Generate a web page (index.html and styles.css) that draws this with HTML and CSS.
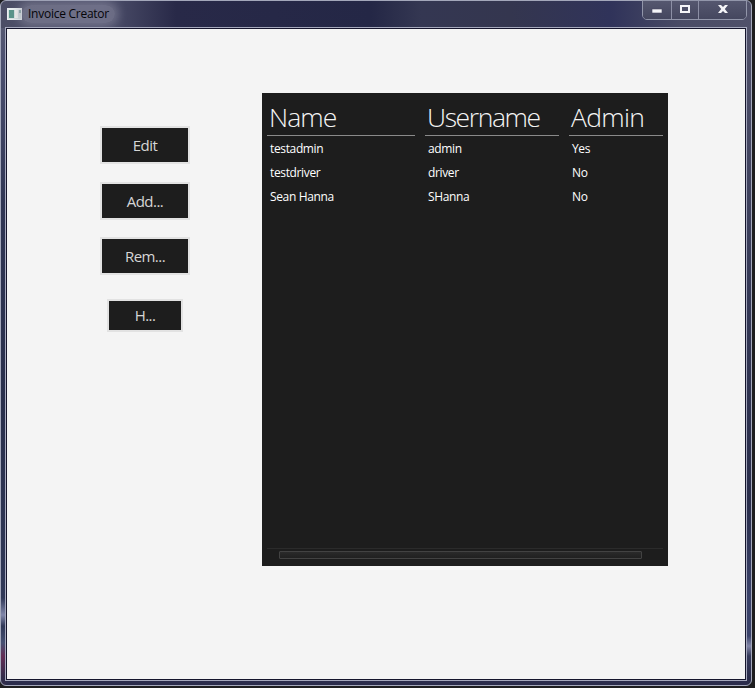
FILE: index.html
```
<!DOCTYPE html>
<html lang="en">
<head>
<meta charset="utf-8">
<title>Invoice Creator</title>
<link rel="stylesheet" href="styles.css">
</head>
<body>
<div class="window">
  <header class="titlebar">
    <svg class="app-icon" width="15" height="12" viewBox="0 0 15 12"><rect width="15" height="12" fill="#e9eff0"/><rect x="1" y="2" width="13" height="9" fill="#d5dfdf"/><rect x="2" y="2" width="5" height="8" fill="#599489"/><rect x="8" y="2" width="3" height="8" fill="#f0f2ee"/><rect x="12" y="2" width="2" height="3" fill="#8eaaa9"/></svg>
    <span class="title">Invoice Creator</span>
    <div class="controls">
      <span class="control min"><svg width="12" height="10" viewBox="0 0 12 10"><rect x="1" y="5" width="10" height="4" fill="#f5f5f8" stroke="#464861" stroke-width=".6"/></svg></span>
      <span class="control max"><svg width="12" height="10" viewBox="0 0 12 10"><path d="M2 2h8v6H2z" fill="none" stroke="#f5f5f8" stroke-width="2"/></svg></span>
      <span class="control close"><svg width="12" height="10" viewBox="0 0 12 10"><path d="M1 1h3l2 2 2-2h3L7.8 5 11 9H8L6 7 4 9H1l3.2-4z" fill="#f5f5f8"/></svg></span>
    </div>
  </header>
  <main class="client">
    <nav class="actions">
      <button class="btn">Edit</button>
      <button class="btn">Add...</button>
      <button class="btn btn-remove">Rem...</button>
      <button class="btn btn-home">H...</button>
    </nav>
    <section class="panel">
      <div class="grid">
        <div class="col"><h2 class="head"><span class="head-name">Name</span></h2><span>testadmin</span><span>testdriver</span><span>Sean Hanna</span></div>
        <div class="col"><h2 class="head"><span class="head-user">Username</span></h2><span>admin</span><span>driver</span><span>SHanna</span></div>
        <div class="col"><h2 class="head"><span class="head-admin">Admin</span></h2><span>Yes</span><span>No</span><span>No</span></div>
      </div>
      <div class="scrollbar"><div class="thumb"></div></div>
    </section>
  </main>
</div>
</body>
</html>
```
FILE: styles.css
```
* { box-sizing: border-box; }
body {
  margin: 0;
  width: 755px;
  height: 688px;
  overflow: hidden;
  background: #1d1d1f;
  font-family: "Open Sans", "Noto Sans", sans-serif;
}
.window {
  width: 752px;
  height: 686px;
  border: 1px solid #a3a7ba;
  border-radius: 6px;
  padding: 0 4px 4px;
  display: flex;
  flex-direction: column;
  background:
    linear-gradient(180deg, #555871 0, #4c5070 33px, #303654 173px, #292f4c 373px, #303857 570px, #8187aa 587px, #303857 598px, #465072 615px, #632e55 628px, #302c4a 650px) 0 27px / 5px 100% no-repeat,
    linear-gradient(180deg, #4f5068, #484a65 73px, #343856 273px, #292d4b 473px, #3a426a 570px, #3a426a 608px, #8286a8 618px, #353a5b 628px, #292b49 650px) 100% 27px / 5px 100% no-repeat,
    linear-gradient(90deg, #4b4d65 0, #50526d 100px, #282948 175px, #242746 370px, #343752 420px, #34364f 510px, #30335a 610px, #494b65 680px, #50516a) 0 0 / 100% 27px no-repeat,
    #2b2c4c;
}
.titlebar {
  flex: none;
  height: 26px;
  display: flex;
  align-items: flex-start;
  padding-left: 2px;
}
.app-icon { margin-top: 7px; flex: none; }
.title {
  margin: 4px 0 0 0;
  padding: 0 6px;
  height: 18px;
  line-height: 18px;
  font-size: 12px;
  letter-spacing: -.26px;
  color: #050509;
  white-space: nowrap;
  border-radius: 9px;
  background: rgba(144, 145, 166, .48);
  box-shadow: 0 0 8px 4px rgba(144, 145, 166, .48);
}
.controls {
  display: flex;
  width: 105px;
  height: 20px;
  margin: -1px 0 0 auto;
  border: 1px solid #9296aa;
  border-radius: 0 0 5px 5px;
}
.control {
  display: flex;
  justify-content: center;
  align-items: center;
  padding-bottom: 2px;
  border-right: 1px solid #8c8fa5;
  background: linear-gradient(#55576f, #45475f);
}
.min { width: 29px; border-radius: 0 0 0 4px; }
.max { width: 27px; }
.close { flex: 1; border-right: 0; border-radius: 0 0 4px 0; }
.client {
  flex: 1;
  display: flex;
  align-items: flex-start;
  border: 1px solid #a6a9bd;
  outline: 1px solid #15152c;
  outline-offset: -2px;
  background: #f4f4f4;
}
.actions {
  width: 90px;
  margin: 98px 0 0 94px;
  display: flex;
  flex-direction: column;
  align-items: center;
  gap: 18px;
}
.btn {
  width: 90px;
  height: 38px;
  padding: 0;
  border: 2px solid #e2e2e2;
  background: #1d1d1d;
  color: #d6d6d6;
  font: 15px/32px "Open Sans", sans-serif;
  letter-spacing: -.55px;
}
.btn-remove { margin-top: -1px; }
.btn-home { width: 76px; height: 33px; line-height: 27px; margin-top: 6px; }
.panel {
  width: 406px;
  height: 473px;
  margin: 65px 0 0 72px;
  padding: 5px 5px 6px;
  display: flex;
  flex-direction: column;
  justify-content: space-between;
  background: #1d1d1d;
}
.grid {
  display: grid;
  grid-template-columns: 148px 134px 94px;
  gap: 10px;
}
.col { display: flex; flex-direction: column; }
.col > span {
  height: 24px;
  padding-left: 3px;
  font-size: 12px;
  line-height: 24px;
  letter-spacing: -.36px;
  color: #fff;
}
.head {
  height: 38px;
  margin: 0 0 1px;
  padding-left: 2px;
  border-bottom: 1px solid #8a8a8a;
  color: #f4f4f4;
  font-size: 26.5px;
  font-weight: 300;
  line-height: 39px;
  white-space: nowrap;
}
.head span { display: inline-block; letter-spacing: -.9px; }
.head .head-user { letter-spacing: -1.4px; }
.head .head-admin { letter-spacing: -.7px; }
.scrollbar {
  height: 12px;
  padding: 2px 21px 0 12px;
  border-top: 1px solid #2b2b2b;
}
.thumb {
  height: 8px;
  border: 1px solid #424242;
  border-radius: 1px;
  background: linear-gradient(#2a2a2a, #202020);
}
```
